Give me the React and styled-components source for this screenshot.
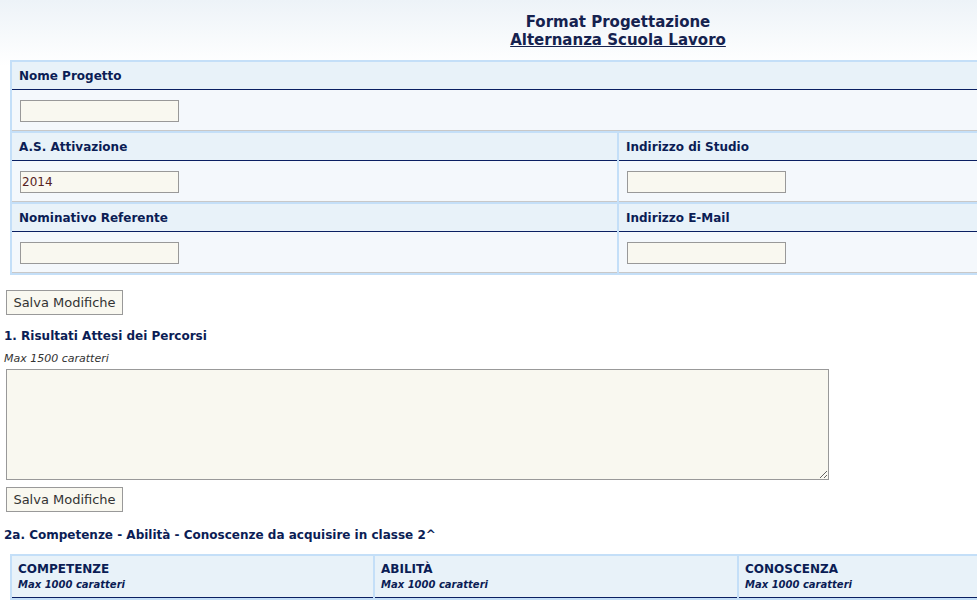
import React from "react";
import styled, { createGlobalStyle } from "styled-components";

const Global = createGlobalStyle`
  html, body { margin: 0; padding: 0; }
  body {
    font-family: "DejaVu Sans", Verdana, sans-serif;
    background: linear-gradient(to bottom, #edf3f8 0px, #ffffff 66px) no-repeat, #ffffff;
    color: #0b1d55;
    overflow: hidden;
  }
`;

const Page = styled.div`
  width: 1222px;
  padding: 0 0 20px 4px;
`;

const TitleBlock = styled.div`
  text-align: center;
  margin-left: 6px;
  padding: 13px 0 11px 0;
  font-size: 15px;
  font-weight: bold;
  line-height: 18px;
  color: #15224f;
`;

const TitleLine = styled.div``;

const TitleLink = styled.span`
  text-decoration: underline;
`;

const FormGrid = styled.div`
  margin-left: 6px;
  display: grid;
  grid-template-columns: 1fr 1fr;
  gap: 2px;
  padding: 2px;
  background: #c4dff8;
`;

const Field = styled.div`
  grid-column: ${(p) => (p.$wide ? "1 / -1" : "auto")};
  display: flex;
  flex-direction: column;
`;

const Label = styled.div`
  height: 27px;
  display: flex;
  align-items: center;
  padding-left: 7px;
  background: #e8f2f9;
  border-bottom: 1px solid #0a1f62;
  font-size: 12px;
  font-weight: bold;
  color: #0b1d55;
`;

const Value = styled.div`
  height: 41px;
  box-sizing: border-box;
  padding: 10px 0 0 8px;
  background: #f4f8fc;
  border-bottom: 1px solid #c8c8c8;
`;

const TextInput = styled.input`
  box-sizing: border-box;
  display: block;
  width: 159px;
  height: 22px;
  margin: 0;
  padding: 0 1px;
  border: 1px solid #999999;
  background: #f9f8f0;
  font-family: "DejaVu Sans", Verdana, sans-serif;
  font-size: 12px;
  color: #552222;
  outline: none;
`;

const Button = styled.button`
  box-sizing: border-box;
  display: block;
  width: 117px;
  height: 25px;
  margin: ${(p) => p.$margin};
  padding: 0;
  border: 1px solid #999999;
  background: #f9f8f0;
  font-family: "DejaVu Sans", Verdana, sans-serif;
  font-size: 13px;
  color: #333333;
  border-radius: 0;
`;

const SectionTitle = styled.div`
  font-size: 12px;
  font-weight: bold;
  line-height: 16px;
  color: #0b1d55;
  margin: ${(p) => p.$margin};
`;

const Hint = styled.div`
  font-size: 11px;
  font-style: italic;
  line-height: 14px;
  color: #333333;
  margin: 8px 0 3px 0;
`;

const TextArea = styled.textarea`
  display: block;
  box-sizing: border-box;
  width: 823px;
  height: 111px;
  margin: 0 0 0 2px;
  border: 1px solid #999999;
  background: #f9f8f0;
  resize: both;
  outline: none;
`;

const ColTable = styled.div`
  margin: 11px 0 0 6px;
  display: grid;
  grid-template-columns: 361px 362px 1fr;
  gap: 2px;
  padding: 2px;
  background: #c4dff8;
`;

const ColHead = styled.div`
  height: 42px;
  box-sizing: border-box;
  padding: 6px 0 0 6px;
  background: #e8f2f9;
  border-bottom: 1px solid #0a1f62;
  color: #0b1d55;
`;

const ColName = styled.div`
  font-size: 12px;
  font-weight: bold;
  line-height: 15px;
`;

const ColHint = styled.div`
  font-size: 10px;
  font-weight: bold;
  font-style: italic;
  line-height: 14px;
  margin-top: 1px;
`;

export default function App() {
  return (
    <>
      <Global />
      <Page>
        <TitleBlock>
          <TitleLine>Format Progettazione</TitleLine>
          <TitleLine>
            <TitleLink>Alternanza Scuola Lavoro</TitleLink>
          </TitleLine>
        </TitleBlock>

        <FormGrid>
          <Field $wide>
            <Label>Nome Progetto</Label>
            <Value>
              <TextInput defaultValue="" />
            </Value>
          </Field>
          <Field>
            <Label>A.S. Attivazione</Label>
            <Value>
              <TextInput defaultValue="2014" />
            </Value>
          </Field>
          <Field>
            <Label>Indirizzo di Studio</Label>
            <Value>
              <TextInput defaultValue="" />
            </Value>
          </Field>
          <Field>
            <Label>Nominativo Referente</Label>
            <Value>
              <TextInput defaultValue="" />
            </Value>
          </Field>
          <Field>
            <Label>Indirizzo E-Mail</Label>
            <Value>
              <TextInput defaultValue="" />
            </Value>
          </Field>
        </FormGrid>

        <Button $margin="15px 0 0 2px">Salva Modifiche</Button>
        <SectionTitle $margin="13px 0 0 0">1. Risultati Attesi dei Percorsi</SectionTitle>
        <Hint>Max 1500 caratteri</Hint>
        <TextArea />
        <Button $margin="7px 0 0 2px">Salva Modifiche</Button>
        <SectionTitle $margin="15px 0 0 0">
          2a. Competenze - Abilità - Conoscenze da acquisire in classe 2^
        </SectionTitle>

        <ColTable>
          <ColHead>
            <ColName>COMPETENZE</ColName>
            <ColHint>Max 1000 caratteri</ColHint>
          </ColHead>
          <ColHead>
            <ColName>ABILITÀ</ColName>
            <ColHint>Max 1000 caratteri</ColHint>
          </ColHead>
          <ColHead>
            <ColName>CONOSCENZA</ColName>
            <ColHint>Max 1000 caratteri</ColHint>
          </ColHead>
        </ColTable>
      </Page>
    </>
  );
}
